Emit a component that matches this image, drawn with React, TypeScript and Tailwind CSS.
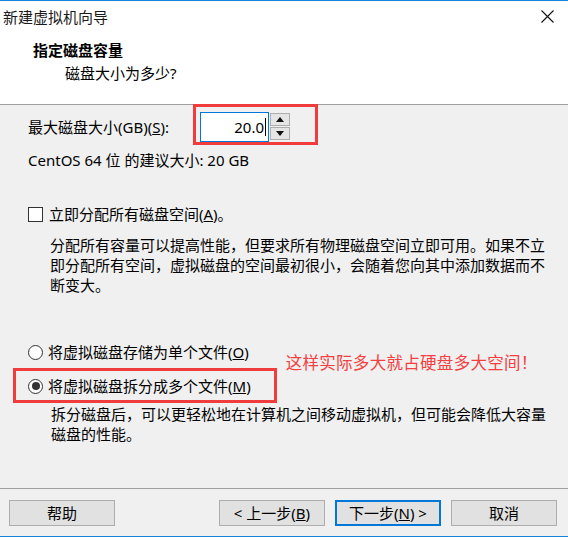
import React from 'react';

const FONT = { fontFamily: '"Noto Sans", "Noto Sans CJK SC", sans-serif' };

const Radio = ({ checked }: { checked?: boolean }) => (
  <span className="w-[15px] h-[15px] rounded-full border border-[#333333] bg-white flex items-center justify-center shrink-0">
    {checked && <span className="w-[8px] h-[8px] rounded-full bg-[#333333]" />}
  </span>
);

const Btn = ({ children, primary }: { children: React.ReactNode; primary?: boolean }) => (
  <button
    className={
      primary
        ? 'w-[106px] h-[26px] bg-[#e1e1e1] border-2 border-[#0078d7] text-[15px] leading-[20px] text-black flex items-center justify-center'
        : 'w-[106px] h-[26px] bg-[#e1e1e1] border border-[#adadad] text-[15px] leading-[20px] text-black flex items-center justify-center'
    }
  >
    {children}
  </button>
);

export default function App() {
  return (
    <div style={FONT} className="w-[568px] h-[537px] bg-[#f0f0f0] border-t border-b border-[#1883d7] flex flex-col text-black">
      {/* title + header */}
      <div className="bg-white h-[104px] border-b border-[#a0a0a0] flex flex-col">
        <div className="h-[32px] flex items-center justify-between pl-[3px] pr-[14px]">
          <span className="text-[15px] leading-[20px] text-[#1a1a1a]">新建虚拟机向导</span>
          <svg width="13" height="13" viewBox="0 0 13 13" className="mt-[-1px]">
            <path d="M0.5 0.5 L12.5 12.5 M12.5 0.5 L0.5 12.5" stroke="#111" strokeWidth="1.1" fill="none" />
          </svg>
        </div>
        <div className="pl-[33px] pt-[7px] flex flex-col">
          <span className="text-[15px] leading-[20px] font-bold">指定磁盘容量</span>
          <span className="text-[15px] leading-[20px] mt-[3px] pl-[32px]">磁盘大小为多少?</span>
        </div>
      </div>

      {/* body */}
      <div className="flex flex-col pl-[28px]">
        <div className="flex items-center mt-[7px] h-[30px]">
          <span className="text-[15px] leading-[20px] w-[172px]">
            最大磁盘大小(GB)(<span className="underline">S</span>):
          </span>
          <div className="relative flex items-center">
            <div className="absolute left-[-7px] top-[-8px] w-[125px] h-[41px] border-[3px] border-[#f03c3c]" />
            <div className="w-[69px] h-[30px] bg-white border border-[#0078d7] flex items-center justify-end pr-[2px]">
              <span className="text-[15px] leading-[20px]">20.0</span>
              <span className="w-[1px] h-[18px] bg-black ml-[1px]" />
            </div>
            <div className="flex flex-col gap-[1px] ml-[1px] h-[28px]">
              <div className="w-[20px] h-[13px] bg-[#e5e5e5] border border-[#adadad] flex items-center justify-center">
                <svg width="8" height="5" viewBox="0 0 8 5"><path d="M4 0 L8 5 L0 5 Z" fill="#111" /></svg>
              </div>
              <div className="w-[20px] h-[13px] bg-[#e5e5e5] border border-[#adadad] flex items-center justify-center">
                <svg width="8" height="5" viewBox="0 0 8 5"><path d="M0 0 L8 0 L4 5 Z" fill="#111" /></svg>
              </div>
            </div>
          </div>
        </div>

        <div className="text-[15px] leading-[20px] mt-[8px]">CentOS 64 位 的建议大小: 20 GB</div>

        <div className="flex items-center gap-[6px] mt-[34px] h-[20px]">
          <span className="w-[15px] h-[15px] border border-[#333333] bg-white shrink-0" />
          <span className="text-[15px] leading-[20px]">
            立即分配所有磁盘空间(<span className="underline">A</span>)。
          </span>
        </div>

        <p className="text-[15px] leading-[20px] mt-[11px] pl-[22px] whitespace-nowrap">
          分配所有容量可以提高性能，但要求所有物理磁盘空间立即可用。如果不立
          <br />
          即分配所有空间，虚拟磁盘的空间最初很小，会随着您向其中添加数据而不
          <br />
          断变大。
        </p>

        <div className="flex mt-[47px]">
          <div className="flex flex-col">
            <div className="flex items-center gap-[5px] h-[20px]">
              <Radio />
              <span className="text-[15px] leading-[20px]">
                将虚拟磁盘存储为单个文件(<span className="underline">O</span>)
              </span>
            </div>
            <div className="relative flex items-center gap-[5px] h-[20px] mt-[14px]">
              <div className="absolute left-[-15px] top-[-8px] w-[264px] h-[35px] border-[3px] border-[#f03c3c]" />
              <Radio checked />
              <span className="text-[15px] leading-[20px]">
                将虚拟磁盘拆分成多个文件(<span className="underline">M</span>)
              </span>
            </div>
          </div>
          <span className="text-[16.5px] leading-[20px] text-[#f24040] ml-[35px] mt-[11px] self-start tracking-[0.3px]">
            这样实际多大就占硬盘多大空间！
          </span>
        </div>

        <p className="text-[15px] leading-[20px] mt-[8px] pl-[23px] whitespace-nowrap">
          拆分磁盘后，可以更轻松地在计算机之间移动虚拟机，但可能会降低大容量
          <br />
          磁盘的性能。
        </p>
      </div>

      {/* footer */}
      <div className="mt-auto border-t border-[#a0a0a0] h-[48px] flex items-start justify-between pt-[11px] pl-[9px] pr-[11px]">
        <Btn>帮助</Btn>
        <div className="flex gap-[10px]">
          <Btn>&lt; 上一步(<span className="underline">B</span>)</Btn>
          <Btn primary>下一步(<span className="underline">N</span>) &gt;</Btn>
          <Btn>取消</Btn>
        </div>
      </div>
    </div>
  );
}
